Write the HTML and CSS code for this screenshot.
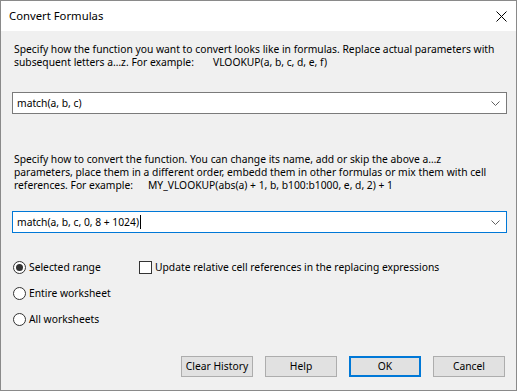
FILE: index.html
```html
<!DOCTYPE html>
<html>
<head>
<meta charset="utf-8">
<link rel="stylesheet" href="styles.css">
</head>
<body>
<div class="window">
  <div class="titlebar">
    <span class="title">Convert Formulas</span>
    <svg class="close" width="11" height="11" viewBox="0 0 11 11"><path d="M0.5 0.5 L10.5 10.5 M10.5 0.5 L0.5 10.5" stroke="#000" stroke-width="1" fill="none"/></svg>
  </div>
  <div class="client">
    <p class="para p1"><span class="line">Specify how the function you want to convert looks like in formulas. Replace actual parameters with</span><span class="line"><span class="pre pre1">subsequent letters a…z. For example:</span>VLOOKUP(a, b, c, d, e, f)</span></p>
    <div class="combo c1"><span class="val">match(a, b, c)</span><svg class="chev" width="9" height="5" viewBox="0 0 9 5"><path d="M0.5 0.5 L4.5 4.5 L8.5 0.5" stroke="#606060" fill="none"/></svg></div>
    <p class="para p2"><span class="line">Specify how to convert the function. You can change its name, add or skip the above a…z</span><span class="line">parameters, place them in a different order, embedd them in other formulas or mix them with cell</span><span class="line"><span class="pre pre2">references. For example:</span>MY_VLOOKUP(abs(a) + 1, b, b100:b1000, e, d, 2) + 1</span></p>
    <div class="combo c2 focused"><span class="val">match(a, b, c, 0, 8 + 1024)<span class="caret"></span></span><svg class="chev" width="9" height="5" viewBox="0 0 9 5"><path d="M0.5 0.5 L4.5 4.5 L8.5 0.5" stroke="#606060" fill="none"/></svg></div>
    <div class="options">
      <div class="radios">
        <label class="opt"><span class="radio checked"></span>Selected range</label>
        <label class="opt"><span class="radio"></span>Entire worksheet</label>
        <label class="opt"><span class="radio"></span>All worksheets</label>
      </div>
      <label class="opt check"><span class="box"></span>Update relative cell references in the replacing expressions</label>
    </div>
    <div class="buttons">
      <button class="btn">Clear History</button>
      <button class="btn">Help</button>
      <button class="btn default">OK</button>
      <button class="btn">Cancel</button>
    </div>
  </div>
</div>
</body>
</html>
```
FILE: styles.css
```css
* { box-sizing: border-box; }
html, body { margin: 0; padding: 0; background: #f0f0f0; }
body { font-family: "Noto Sans", "Open Sans", sans-serif; font-size: 10.3px; color: #000; }
.window {
  width: 517px; height: 391px;
  border: 1px solid #8a8a8a;
  display: flex; flex-direction: column;
  background: #f0f0f0;
}
.titlebar {
  height: 30px; background: #fff;
  display: flex; align-items: center; justify-content: space-between;
  padding: 0 9px 0 8px;
}
.title { font-size: 11.3px; line-height: 16px; }
.close { display: block; }
.client { flex: 1; padding: 12px 9px 0 11px; display: flex; flex-direction: column; }
.para { margin: 0; line-height: 13px; padding-left: 2px; }
.line { display: block; white-space: nowrap; }
.pre { display: inline-block; }
.pre1 { width: 199px; }
.pre2 { width: 134px; }
.combo {
  margin-top: 23px; height: 22px;
  border: 1px solid #7a7a7a; background: #fff;
  display: flex; align-items: center; justify-content: space-between;
  padding: 0 6px 0 4px;
}
.combo.focused { border-color: #0078d7; }
.val { white-space: nowrap; display: flex; align-items: center; }
.caret { display: inline-block; width: 1px; height: 14px; background: #000; margin-left: 1px; }
.p2 { margin-top: 39px; }
.c2 { margin-top: 19px; }
.options { margin-top: 21px; display: flex; align-items: flex-start; }
.radios { display: flex; flex-direction: column; width: 127px; padding-left: 1px; }
.opt { display: flex; align-items: center; height: 26px; white-space: nowrap; }
.radio {
  width: 13px; height: 13px; border: 1px solid #333; border-radius: 50%;
  background: #fff; margin-right: 3px; position: relative; flex: none;
}
.radio.checked::after {
  content: ""; position: absolute; left: 2px; top: 2px; width: 7px; height: 7px;
  border-radius: 50%; background: #333;
}
.box { width: 13px; height: 13px; border: 1px solid #333; background: #fff; margin-right: 3px; flex: none; }
.buttons { margin-top: auto; margin-bottom: 13px; display: flex; justify-content: flex-end; gap: 12px; padding-right: 2px; }
.btn {
  width: 72px; height: 21px; background: #e1e1e1; border: 1px solid #adadad;
  font: inherit; color: #000; padding: 0; line-height: 17px;
}
.btn.default { border: 2px solid #0078d7; }
```
